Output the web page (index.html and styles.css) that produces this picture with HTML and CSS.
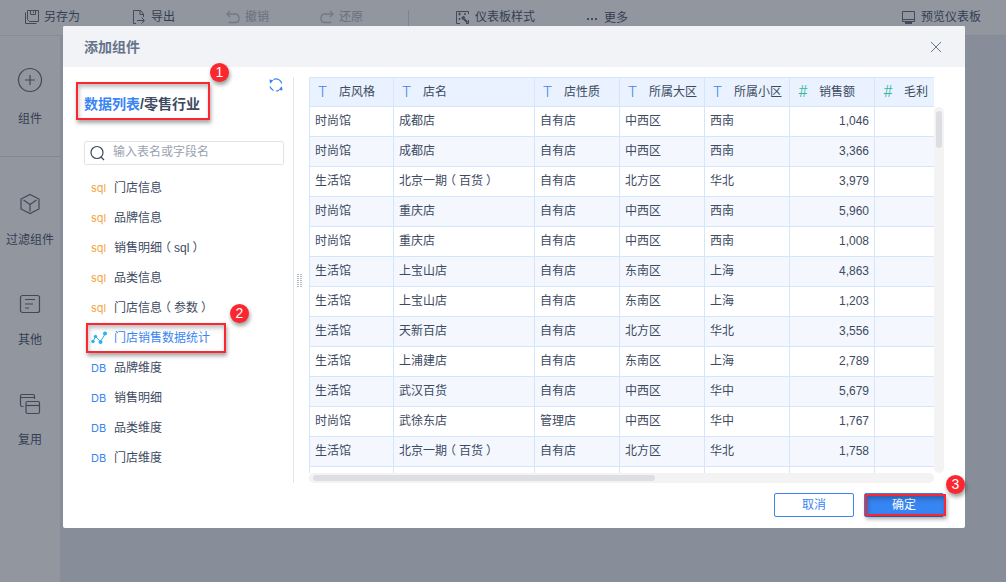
FILE: index.html
```
<!DOCTYPE html>
<html lang="zh-CN">
<head>
<meta charset="utf-8">
<title>添加组件</title>
<link rel="stylesheet" href="styles.css">
</head>
<body>
<div class="app">
  <header class="toolbar">
    <div class="tool save"><svg width="16" height="16" viewBox="0 0 16 16"><path d="M3.500 1.500h11v11h-9l-2-2zM6.500 1.500v4h5v-4M9.500 2.500v1.500M1.500 3.500v11h11"/></svg><span>另存为</span></div>
    <div class="tool export"><svg width="16" height="16" viewBox="0 0 16 16"><path d="M5 14.500H2.500v-13h7l3 3.500v3M9 1.500v4h3.500M6 11.500h7M10.500 8.500l3 3-3 3"/></svg><span>导出</span></div>
    <div class="tool undo off"><svg width="16" height="16" viewBox="0 0 16 16"><path d="M5 2L2 5l3 3M2 5h9c4 1 4 8 0 8.500H3.500"/></svg><span>撤销</span></div>
    <div class="tool redo off"><svg width="16" height="16" viewBox="0 0 16 16"><path d="M11 2l3 3-3 3M14 5H5c-4 1-4 8 0 8.500h7.500"/></svg><span>还原</span></div>
    <i class="sep"></i>
    <div class="tool style"><svg width="16" height="16" viewBox="0 0 16 16"><path d="M5 14.500H1.500v-12h12V5M13.500 11v3.500H11M3 5h3M4.500 3.500v3M9 5h2M10 4v2M3.500 10h2M4.500 9v2"/><path class="thick" d="M7 8l5.500 5.500M9.500 7.500L7 10"/></svg><span>仪表板样式</span></div>
    <div class="tool more"><svg width="12" height="16" viewBox="0 0 12 16"><path class="dots" d="M1 9h2M5 9h2M9 9h2"/></svg><span>更多</span></div>
    <div class="tool preview"><svg width="16" height="16" viewBox="0 0 16 16"><path d="M1.500 2.500h12v10h-12zM1.500 10.500h12"/><path class="thick" d="M4 14h7"/></svg><span>预览仪表板</span></div>
  </header>
  <div class="work">
    <nav class="rail">
      <div class="rail-item first"><svg width="26" height="26" viewBox="0 0 26 26"><circle cx="13" cy="13" r="11.500"/><path d="M13 8v10M8 13h10"/></svg><span>组件</span></div>
      <div class="rail-item second"><svg width="26" height="26" viewBox="0 0 26 26"><path d="M13 3.500l9 4.500v10l-9 4.500L4 18V8zM6.500 9l6.500 4.500L19.500 9M13 13.500v7"/></svg><span>过滤组件</span></div>
      <div class="rail-item"><svg width="26" height="26" viewBox="0 0 26 26"><rect x="3.500" y="4.500" width="19" height="17" rx="2"/><path d="M8 8.500h10M8 13h8M8 17h4"/></svg><span>其他</span></div>
      <div class="rail-item"><svg width="26" height="26" viewBox="0 0 26 26"><path d="M17.500 8V5q0-1.500-1.500-1.500H5Q3.500 3.500 3.500 5v9q0 1.500 1.500 1.500h1.500M3.500 6.500h14"/><rect x="9" y="10.500" width="13.500" height="12" rx="1.500"/><path d="M9 14.500h13.500"/></svg><span>复用</span></div>
    </nav>
    <main class="canvas"></main>
  </div>
</div>

<section class="modal">
  <header class="modal-head"><h1>添加组件</h1><svg width="12" height="12" viewBox="0 0 12 12"><path d="M1 1l10 10M11 1L1 11"/></svg></header>
  <div class="modal-body">
    <aside class="source">
      <div class="path"><b><a>数据列表</a>/零售行业</b>
        <svg class="refresh" width="14" height="14" viewBox="0 0 14 14"><path d="M1 8.500A6 6 0 0 0 4.500 12.500M4.500 1.500A6 6 0 0 1 12.800 5.500M1.500 5A6 6 0 0 1 2.500 3M12.500 9A6 6 0 0 1 11.500 11M7 13A6 6 0 0 0 10 12.200"/><path class="fill" d="M.5 1.500l4 .8L1 5.500zM13.500 12.500l-4-.8L13 8.500z"/></svg>
      </div>
      <div class="search"><svg width="16" height="16" viewBox="0 0 16 16"><circle cx="7" cy="7.500" r="6"/><path d="M11 12l3 3"/></svg><span>输入表名或字段名</span></div>
      <ul class="list">
        <li><i class="sql">sql</i>门店信息</li>
        <li><i class="sql">sql</i>品牌信息</li>
        <li><i class="sql">sql</i>销售明细<span class="paren">（</span>sql<span class="paren">）</span></li>
        <li><i class="sql">sql</i>品类信息</li>
        <li><i class="sql">sql</i>门店信息<span class="paren">（</span>参数<span class="paren">）</span></li>
        <li class="active"><svg width="16" height="14" viewBox="0 0 16 14"><path d="M2 10.500l2.500-5 5 5L14 3"/><circle cx="2" cy="10.500" r="1.700"/><circle cx="4.500" cy="5.500" r="1.700"/><circle cx="9.500" cy="11" r="2"/><circle cx="14" cy="2.500" r="2"/></svg>门店销售数据统计</li>
        <li><i class="db">DB</i>品牌维度</li>
        <li><i class="db">DB</i>销售明细</li>
        <li><i class="db">DB</i>品类维度</li>
        <li><i class="db">DB</i>门店维度</li>
      </ul>
    </aside>
    <div class="splitter"><svg width="5" height="13" viewBox="0 0 5 13"><path d="M1 0v13M4 0v13"/></svg></div>
    <div class="grid-wrap">
      <div class="grid-view">
        <table>
          <colgroup><col class="c1"><col class="c2"><col class="c3"><col class="c3"><col class="c3"><col class="c3"><col class="c3"></colgroup>
          <thead><tr><th><i>T</i>店风格</th><th><i>T</i>店名</th><th><i>T</i>店性质</th><th><i>T</i>所属大区</th><th><i>T</i>所属小区</th><th><i class="num">#</i>销售额</th><th><i class="num">#</i>毛利</th></tr></thead>
          <tbody>
            <tr><td>时尚馆</td><td>成都店</td><td>自有店</td><td>中西区</td><td>西南</td><td>1,046</td><td></td></tr>
            <tr><td>时尚馆</td><td>成都店</td><td>自有店</td><td>中西区</td><td>西南</td><td>3,366</td><td></td></tr>
            <tr><td>生活馆</td><td>北京一期<span class="paren">（</span>百货<span class="paren">）</span></td><td>自有店</td><td>北方区</td><td>华北</td><td>3,979</td><td></td></tr>
            <tr><td>时尚馆</td><td>重庆店</td><td>自有店</td><td>中西区</td><td>西南</td><td>5,960</td><td></td></tr>
            <tr><td>时尚馆</td><td>重庆店</td><td>自有店</td><td>中西区</td><td>西南</td><td>1,008</td><td></td></tr>
            <tr><td>生活馆</td><td>上宝山店</td><td>自有店</td><td>东南区</td><td>上海</td><td>4,863</td><td></td></tr>
            <tr><td>生活馆</td><td>上宝山店</td><td>自有店</td><td>东南区</td><td>上海</td><td>1,203</td><td></td></tr>
            <tr><td>生活馆</td><td>天新百店</td><td>自有店</td><td>北方区</td><td>华北</td><td>3,556</td><td></td></tr>
            <tr><td>生活馆</td><td>上浦建店</td><td>自有店</td><td>东南区</td><td>上海</td><td>2,789</td><td></td></tr>
            <tr><td>生活馆</td><td>武汉百货</td><td>自有店</td><td>中西区</td><td>华中</td><td>5,679</td><td></td></tr>
            <tr><td>时尚馆</td><td>武徐东店</td><td>管理店</td><td>中西区</td><td>华中</td><td>1,767</td><td></td></tr>
            <tr><td>生活馆</td><td>北京一期<span class="paren">（</span>百货<span class="paren">）</span></td><td>自有店</td><td>北方区</td><td>华北</td><td>1,758</td><td></td></tr>
            <tr><td></td><td></td><td></td><td></td><td></td><td></td><td></td></tr>
          </tbody>
        </table>
      </div>
      <div class="vbar"><i></i></div>
      <div class="hbar"><i></i></div>
    </div>
  </div>
  <footer class="modal-foot"><button class="btn">取消</button><button class="btn primary">确定</button></footer>
  <div class="mark mark1"></div><div class="mark mark2"></div><div class="mark mark3"></div>
  <b class="badge badge1">1</b><b class="badge badge2">2</b><b class="badge badge3">3</b>
</section>
</body>
</html>
```
FILE: styles.css
```
* { box-sizing: border-box; }
body { margin: 0; width: 1006px; height: 582px; overflow: hidden; font: 12px/18px "Liberation Sans", "Noto Sans CJK SC", sans-serif; color: #3d4a5f; }
i { font-style: normal; }
svg { fill: none; stroke: currentColor; flex: none; display: block; }
.app { height: 582px; display: flex; flex-direction: column; color: #343e53; }
.toolbar { height: 36px; background: #92969f; border-bottom: 1px solid #868b96; display: flex; align-items: flex-start; padding: 8px 0 0 24px; }
.tool { display: flex; gap: 4px; height: 18px; align-items: center; white-space: nowrap; }
.tool svg { color: #424a5b; }
.export { margin-left: 51px; }
.undo { margin-left: 50px; }
.redo { margin-left: 50px; }
.tool.off { color: #6a707d; }
.tool.off svg { color: #747a86; stroke-width: 1.4; }
.sep { width: 1px; height: 17px; margin: 2px 0 0 45px; background: #7d838f; }
.style { margin-left: 46px; }
.more { margin-left: 51px; gap: 6px; padding-top: 1px; }
.preview { margin-left: auto; margin-right: 25px; }
.thick { stroke-width: 2; }
.dots { stroke-width: 2; }
.work { flex: 1; display: flex; }
.rail { width: 60px; background: #92969f; }
.rail-item { height: 100px; padding-top: 19px; display: flex; flex-direction: column; align-items: center; }
.rail-item svg { color: #414959; stroke-width: 1.2; margin-bottom: 14px; }
.rail-item.first { height: 121px; padding-top: 31px; border-bottom: 1px solid #828893; }
.rail-item.first svg { margin-bottom: 17px; }
.rail-item.second { height: 115px; padding-top: 34px; }
.canvas { flex: 1; background: #888e99; }
.modal { position: absolute; left: 63px; top: 26px; width: 902px; height: 502px; background: #fff; border-radius: 2px; display: flex; flex-direction: column; }
.modal-head { height: 41px; background: #f2f3f7; border-radius: 2px 2px 0 0; display: flex; justify-content: space-between; align-items: center; padding: 0 23px 0 21px; }
.modal-head h1 { margin: 0; font-size: 14px; line-height: 20px; font-weight: 700; color: #66738a; }
.modal-head svg { color: #68758a; }
.modal-body { height: 416px; padding-top: 10px; display: flex; }
.source { width: 231px; border-right: 1px solid #e5e6ea; padding: 0 9px 0 21px; }
.path { height: 64px; display: flex; justify-content: space-between; }
.path b { font-size: 14px; line-height: 20px; font-weight: 700; margin-top: 17px; color: #3d4a5f; }
.path a { color: #3a85f2; }
.refresh { margin: 1px 1px 0 0; color: #3a85f2; stroke-width: 1.2; }
.refresh .fill { fill: #3a85f2; stroke: none; }
.search { height: 24px; border: 1px solid #e1e3e6; border-radius: 2px; display: flex; align-items: center; gap: 7px; padding: 0 5px; color: #9aa2af; }
.search span { margin-bottom: 3px; }
.search svg { color: #3d4a5f; stroke-width: 1.2; }
.list { list-style: none; margin: 8px 0 0; padding: 0 0 0 7px; }
.list li { height: 30px; display: flex; align-items: center; white-space: nowrap; }
.list i { width: 23px; font: 11px/18px Inter, sans-serif; }
.list svg { width: 16px; margin-right: 7px; color: #2ab3ee; }
.list circle { fill: #2ab3ee; stroke: none; }
/* Half-width bracket glyph centred in a full em */
.paren { margin: 0 3px; font-feature-settings: "halt"; }
.sql { color: #f5a544; }
.db { color: #3a85f2; }
.active { color: #3a85f2; }
.splitter { width: 15px; height: 406px; display: flex; align-items: center; padding-left: 3px; color: #6c7687; }
.splitter path { stroke-width: 1; stroke-dasharray: 1 1; }
.grid-wrap { display: grid; grid-template-columns: 625px 10px; grid-template-rows: 396px 10px; }
.grid-view { overflow: hidden; border: 1px solid #d4e6fc; border-width: 1px 0 0 1px; }
table { table-layout: fixed; border-collapse: separate; border-spacing: 0; width: 649px; }
.c1 { width: 84px; }
.c2 { width: 141px; }
.c3 { width: 85px; }
th, td { border: 1px solid #d4e6fc; border-width: 0 1px 1px 0; height: 30px; padding: 0 5px 2px; font-weight: 400; text-align: left; white-space: nowrap; line-height: 18px; }
th { height: 29px; background: #e9f2fe; padding: 0 0 0 8px; }
th i { display: inline-block; width: 21px; font: 300 15px/18px Roboto, "Open Sans", sans-serif; color: #3a85f2; vertical-align: -1px; }
th i.num { font-size: 16px; color: #35b6a5; }
tbody tr:nth-child(even) { background: #f4f8fe; }
td:nth-child(6) { text-align: right; }
.vbar { background: #f3f3f3; border-radius: 5px; margin-top: 30px; padding: 4px 2px; }
.vbar i { display: block; height: 37px; border-radius: 3px; background: #dddee3; }
.hbar { background: #f3f3f3; border-radius: 5px; padding: 2px 4px; }
.hbar i { display: block; width: 342px; height: 6px; border-radius: 3px; background: #dddee3; }
.modal-foot { display: flex; justify-content: flex-end; gap: 10px; padding: 10px 21px 0 0; }
.btn { width: 80px; height: 24px; padding: 0; border: 1px solid #3a85f2; border-radius: 2px; background: #fff; color: #3a85f2; font: inherit; line-height: 20px; }
.btn.primary { background: #3685f2; color: #fff; }
.mark { position: absolute; border: 2px solid #fb2730; box-shadow: 1px 3px 4px rgba(0,0,0,.35), inset 1px 3px 4px rgba(0,0,0,.25); }
.mark1 { left: 13px; top: 56px; width: 134px; height: 38px; }
.mark2 { left: 23px; top: 297px; width: 140px; height: 30px; }
.mark3 { left: 802px; top: 468px; width: 81px; height: 22px; }
.badge { position: absolute; width: 19px; height: 19px; border-radius: 50%; background: #fb2730; color: #fff; font: 14px/19px "Liberation Sans", sans-serif; text-align: center; box-shadow: 1px 3px 4px rgba(0,0,0,.4); }
.badge1 { left: 147px; top: 37px; }
.badge2 { left: 167px; top: 278px; }
.badge3 { left: 883px; top: 449px; }
```
